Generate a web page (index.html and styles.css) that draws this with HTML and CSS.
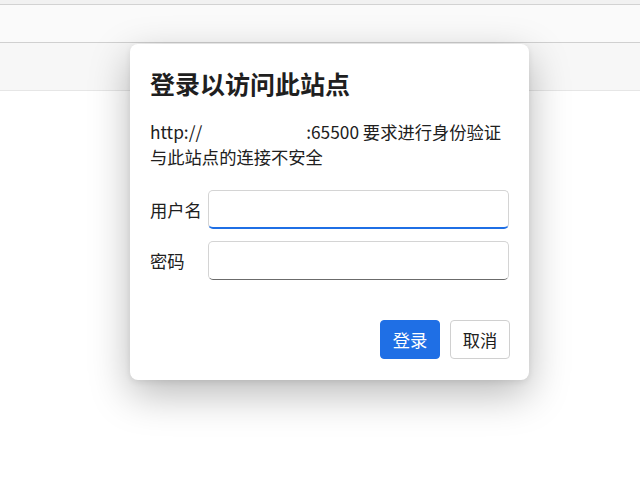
FILE: index.html
```html
<!DOCTYPE html>
<html lang="zh-CN">
<head>
<meta charset="utf-8">
<title>登录以访问此站点</title>
<link rel="stylesheet" href="styles.css">
</head>
<body>
<div class="page">
  <div class="band-top"></div>
  <div class="band-tabs"></div>
  <div class="band-toolbar"></div>
  <div class="content"></div>
</div>
<div class="dialog" role="dialog">
  <h1 class="title">登录以访问此站点</h1>
  <p class="message">http://<span class="redact"></span>:65500 要求进行身份验证<br>与此站点的连接不安全</p>
  <form class="form">
    <div class="row">
      <label class="label" for="u">用户名</label>
      <input class="field field-focus" id="u" type="text">
    </div>
    <div class="row">
      <label class="label" for="p">密码</label>
      <input class="field" id="p" type="password">
    </div>
    <div class="actions">
      <button type="button" class="btn btn-primary">登录</button>
      <button type="button" class="btn btn-secondary">取消</button>
    </div>
  </form>
</div>
</body>
</html>
```
FILE: styles.css
```css
* { box-sizing: border-box; }
html, body { margin: 0; padding: 0; }
body {
  width: 640px;
  height: 480px;
  overflow: hidden;
  background: #ffffff;
  font-family: "Noto Sans CJK SC", "Noto Sans", sans-serif;
  color: #202020;
  position: relative;
}
.page { display: flex; flex-direction: column; height: 480px; }
.band-top { height: 5px; background: #f1f1f1; border-bottom: 1px solid #d2d2d2; }
.band-tabs { height: 38px; background: #fafafa; border-bottom: 1px solid #d0d0d0; }
.band-toolbar { height: 48px; background: #f7f7f7; border-bottom: 1px solid #e6e6e6; }
.content { flex: 1; background: #ffffff; }

.dialog {
  position: absolute;
  left: 130px;
  top: 44px;
  width: 399px;
  height: 336px;
  background: #ffffff;
  border-radius: 8px;
  box-shadow: 0 14px 40px rgba(0, 0, 0, 0.28), 0 2px 6px rgba(0, 0, 0, 0.08);
  padding: 22px 19px 21px 20px;
  display: flex;
  flex-direction: column;
}
.title {
  margin: 0;
  font-size: 25px;
  font-weight: 700;
  line-height: 34px;
  color: #1f1f1f;
}
.message {
  margin: 19px 0 0 0;
  font-size: 17.3px;
  line-height: 25px;
  color: #202020;
}
.redact { display: inline-block; width: 104px; }
.form {
  margin-top: 21px;
  display: flex;
  flex-direction: column;
  gap: 12px;
  flex: 1;
}
.row { display: flex; align-items: center; }
.label {
  width: 58px;
  font-size: 17.3px;
  color: #202020;
}
.field {
  width: 301px;
  height: 39px;
  margin: 0;
  border: 1px solid #d4d4d4;
  border-bottom: 1px solid #6b6b6b;
  border-radius: 5px;
  background: #ffffff;
  font-family: inherit;
  font-size: 16px;
  padding: 0 8px;
  outline: none;
}
.field-focus { border-bottom: 2px solid #1f6fe5; }
.actions {
  margin-top: auto;
  display: flex;
  justify-content: flex-end;
  gap: 10px;
}
.btn {
  width: 60px;
  height: 39px;
  border-radius: 4px;
  font-family: inherit;
  font-size: 17.3px;
  padding: 0;
  cursor: pointer;
}
.btn-primary { background: #1f6fe5; color: #ffffff; border: 1px solid #1f6fe5; }
.btn-secondary { background: #ffffff; color: #202020; border: 1px solid #d0d0d0; }
```
